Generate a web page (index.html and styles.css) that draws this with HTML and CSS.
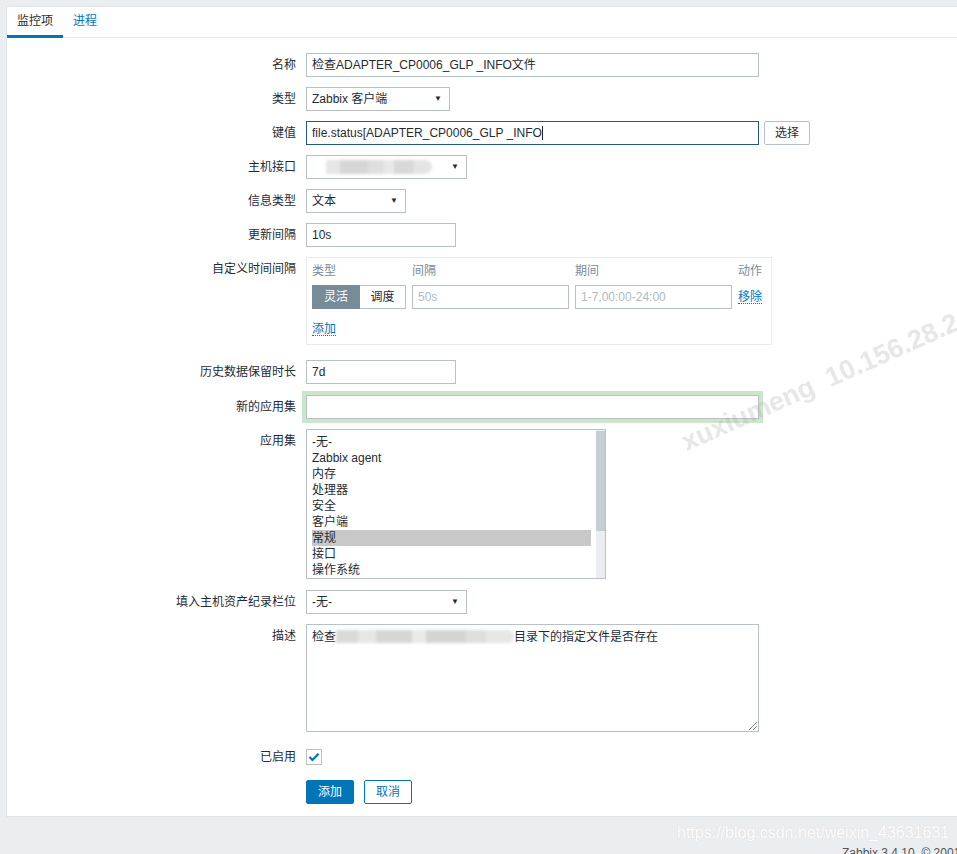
FILE: index.html
```html
<!doctype html>
<html lang="zh">
 <head>
  <meta charset="utf-8">
  <title>监控项</title>
  <link rel="stylesheet" href="styles.css">
 </head>
 <body>
  <div class="panel">
   <ul class="tabs">
    <li class="tab tab-active">监控项</li>
    <li class="tab">进程</li>
   </ul>

   <div class="form">
    <div class="label">名称</div>
    <div class="field"><div class="input w-wide">检查ADAPTER_CP0006_GLP _INFO文件</div></div>

    <div class="label">类型</div>
    <div class="field"><div class="select w-type"><span>Zabbix 客户端</span><span class="arrow">▼</span></div></div>

    <div class="label">键值</div>
    <div class="field row">
     <div class="input w-wide input-focus">file.status[ADAPTER_CP0006_GLP _INFO<span class="caret"></span></div>
     <div class="btn-alt">选择</div>
    </div>

    <div class="label">主机接口</div>
    <div class="field"><div class="select w-iface"><span class="blur blur-iface"></span><span class="arrow">▼</span></div></div>

    <div class="label">信息类型</div>
    <div class="field"><div class="select w-info"><span>文本</span><span class="arrow">▼</span></div></div>

    <div class="label">更新间隔</div>
    <div class="field"><div class="input w-short">10s</div></div>

    <div class="label">自定义时间间隔</div>
    <div class="field">
     <div class="intervals">
      <div class="ihead">类型</div>
      <div class="ihead">间隔</div>
      <div class="ihead">期间</div>
      <div class="ihead">动作</div>

      <div class="radio">
       <span class="radio-on">灵活</span><span class="radio-off">调度</span>
      </div>
      <div class="input placeholder">50s</div>
      <div class="input placeholder">1-7,00:00-24:00</div>
      <a class="link">移除</a>

      <a class="link add-link">添加</a>
     </div>
    </div>

    <div class="label">历史数据保留时长</div>
    <div class="field"><div class="input w-short">7d</div></div>

    <div class="label shift-1">新的应用集</div>
    <div class="field shift-1"><div class="input w-wide input-glow"></div></div>

    <div class="label">应用集</div>
    <div class="field">
     <div class="listbox">
      <ul class="options">
       <li>-无-</li>
       <li>Zabbix agent</li>
       <li>内存</li>
       <li>处理器</li>
       <li>安全</li>
       <li>客户端</li>
       <li class="selected">常规</li>
       <li>接口</li>
       <li>操作系统</li>
      </ul>
      <div class="scrollbar"><div class="thumb"></div></div>
     </div>
    </div>

    <div class="label shift-1">填入主机资产纪录栏位</div>
    <div class="field shift-1"><div class="select w-iface"><span>-无-</span><span class="arrow">▼</span></div></div>

    <div class="label">描述</div>
    <div class="field">
     <div class="textarea">检查<span class="blur blur-desc"></span>目录下的指定文件是否存在<span class="grip"></span></div>
    </div>

    <div class="label shift-3">已启用</div>
    <div class="field shift-3"><span class="checkbox"><svg width="12" height="10" viewBox="0 0 12 10"><path d="M1.5 5 L4.5 8 L10.5 1.8" fill="none" stroke="#0275b8" stroke-width="2.2"/></svg></span></div>

    <div class="label"></div>
    <div class="field row buttons">
     <div class="btn">添加</div>
     <div class="btn-alt btn-cancel">取消</div>
    </div>
   </div>

   <div class="watermark">xuxiumeng&nbsp;&nbsp;10.156.28.247</div>
  </div>

  <div class="footer">
   <div class="csdn">https://blog.csdn.net/weixin_43631631</div>
   <div class="copyright">Zabbix 3.4.10. © 2001–2018, Zabbix SIA</div>
  </div>
 </body>
</html>
```

FILE: styles.css
```css
	body {
		margin: 0;
		padding: 6px 0 0 6px;
		background-color: #ebeef0;
		font-family: 'Liberation Sans', Arial, 'Noto Sans CJK SC', sans-serif;
		font-size: 12px;
		color: #1f2c33;
		overflow: hidden;
		height: 848px;
	}

	.panel {
		position: relative;
		background: #ffffff;
		border: 1px solid #dfe4e7;
		border-right: 0;
		height: 809px;
		overflow: hidden;
	}

	/* tabs */
	.tabs {
		display: flex;
		margin: 0;
		padding: 0;
		list-style: none;
		border-bottom: 1px solid #ebeef0;
	}

	.tab {
		padding: 0 10px;
		height: 28px;
		line-height: 28px;
		color: #0275b8;
		border-bottom: 3px solid transparent;
		margin-bottom: -1px;
	}

	.tab-active {
		color: #1f2c33;
		border-bottom-color: #0275b8;
	}

	/* form grid */
	.form {
		display: grid;
		grid-template-columns: 289px 1fr;
		column-gap: 10px;
		row-gap: 10px;
		padding-top: 15px;
	}

	.label {
		text-align: right;
		line-height: 24px;
		white-space: nowrap;
	}

	.field {
		min-height: 24px;
	}

	.shift-1 { margin-top: 1px; }
	.shift-3 { margin-top: 3px; }

	.row {
		display: flex;
		gap: 5px;
	}

	.input, .select {
		box-sizing: border-box;
		height: 24px;
		line-height: 22px;
		border: 1px solid #b7c1c6;
		padding: 0 5px;
		background: #fff;
		white-space: nowrap;
		overflow: hidden;
	}

	.w-wide { width: 453px; }
	.w-short { width: 150px; }
	.w-type { width: 144px; }
	.w-iface { width: 161px; }
	.w-info { width: 100px; }

	.input-focus {
		border-color: #25597a;
	}

	.caret {
		display: inline-block;
		width: 1px;
		height: 14px;
		background: #1f2c33;
		vertical-align: -3px;
	}

	.input-glow {
		box-shadow: 0 0 0 4px #cbe6cb;
	}

	.select {
		display: flex;
		justify-content: space-between;
		align-items: center;
	}

	.arrow {
		font-size: 8px;
		color: #1f2c33;
		padding-right: 2px;
	}

	.blur {
		display: inline-block;
		filter: blur(1.5px);
		vertical-align: middle;
	}

	.blur-iface {
		width: 124px;
		height: 14px;
		margin-left: -4px;
		background: linear-gradient(to right,
			#ffffff 0, #ffffff 18px,
			#e6e6e6 18px, #e6e6e6 32px,
			#d6d6d6 32px, #d6d6d6 60px,
			#dedede 60px, #dedede 76px,
			#e8e8e8 76px, #e8e8e8 86px,
			#d8d8d8 86px, #d8d8d8 106px,
			#e4e4e4 106px, #e4e4e4 124px);
		border-radius: 0 8px 8px 0;
	}

	.blur-desc {
		width: 178px;
		height: 13px;
		background: linear-gradient(to right,
			#dadada 0, #dadada 22px,
			#e6e6e6 22px, #e6e6e6 40px,
			#d6d6d6 40px, #d6d6d6 76px,
			#eaeaea 76px, #eaeaea 90px,
			#d4d4d4 90px, #d4d4d4 130px,
			#dedede 130px, #dedede 150px,
			#e6e6e6 150px, #e6e6e6 178px);
		border-radius: 0 7px 7px 0;
		margin-top: -2px;
	}

	/* buttons */
	.btn, .btn-alt {
		box-sizing: border-box;
		height: 24px;
		line-height: 22px;
		padding: 0 10px;
		border: 1px solid #0275b8;
		border-radius: 2px;
		text-align: center;
		white-space: nowrap;
	}

	.btn {
		width: 48px;
		background: #0275b8;
		color: #ffffff;
	}

	.btn-alt {
		background: #ffffff;
		color: #1f2c33;
		border-color: #b7c1c6;
	}

	.btn-cancel {
		width: 48px;
		color: #0275b8;
		border-color: #0275b8;
	}

	.buttons {
		gap: 10px;
		padding-top: 1px;
	}

	/* custom intervals */
	.intervals {
		box-sizing: border-box;
		width: 466px;
		border: 1px solid #ebebeb;
		padding: 5px 5px 8px 5px;
		margin-bottom: 5px;
		display: grid;
		grid-template-columns: 94px 157px 157px auto;
		column-gap: 6px;
		row-gap: 0;
	}

	.ihead {
		color: #768d99;
		line-height: 17px;
		padding-bottom: 5px;
	}

	.radio {
		display: flex;
		height: 24px;
		line-height: 22px;
		box-sizing: border-box;
	}

	.radio-on {
		box-sizing: border-box;
		width: 48px;
		text-align: center;
		background: #768d99;
		border: 1px solid #768d99;
		color: #ffffff;
	}

	.radio-off {
		box-sizing: border-box;
		width: 46px;
		text-align: center;
		border: 1px solid #b7c1c6;
		border-left: 0;
	}

	.placeholder {
		color: #acbbc2;
	}

	.link {
		color: #0275b8;
		line-height: 24px;
		justify-self: start;
	}

	.link::after {
		content: "";
		display: block;
		border-bottom: 1px dotted #0275b8;
		margin-top: -6px;
	}

	.add-link {
		grid-column: 1 / 2;
		margin-top: 8px;
	}

	/* listbox */
	.listbox {
		box-sizing: border-box;
		width: 300px;
		height: 150px;
		border: 1px solid #b7c1c6;
		display: flex;
		overflow: hidden;
	}

	.options {
		flex: 1;
		margin: 0;
		padding: 4px 5px 0 5px;
		list-style: none;
		line-height: 16px;
	}

	.options li {
		height: 16px;
	}

	.selected {
		background: #c8c8c8;
	}

	.scrollbar {
		width: 9px;
		background: #ebeef0;
		padding-top: 1px;
	}

	.thumb {
		height: 100px;
		background: #c4ced3;
	}

	/* textarea */
	.textarea {
		position: relative;
		box-sizing: border-box;
		width: 453px;
		height: 108px;
		border: 1px solid #b7c1c6;
		padding: 4px 5px;
		line-height: 16px;
	}

	.grip {
		position: absolute;
		right: 1px;
		bottom: 1px;
		width: 8px;
		height: 8px;
		background: linear-gradient(135deg, transparent 0, transparent 45%, #888 45%, #888 52%, transparent 52%, transparent 70%, #888 70%, #888 77%, transparent 77%);
	}

	.checkbox {
		box-sizing: border-box;
		display: flex;
		align-items: center;
		justify-content: center;
		width: 16px;
		height: 16px;
		margin-top: 4px;
		border: 1px solid #b7c1c6;
	}

	/* watermark drawn over the form */
	.watermark {
		position: absolute;
		left: 676px;
		top: 421px;
		transform: rotate(-24deg);
		transform-origin: left center;
		font-size: 27px;
		font-weight: bold;
		color: rgba(170, 170, 170, 0.3);
		white-space: nowrap;
		pointer-events: none;
	}

	/* footer */
	.footer {
		position: relative;
		height: 36px;
	}

	.csdn {
		position: absolute;
		left: 671px;
		top: 7px;
		font-size: 16px;
		color: #ffffff;
		text-shadow: 0 0 1px #c8cdd0;
		white-space: nowrap;
	}

	.copyright {
		position: absolute;
		left: 836px;
		top: 29px;
		font-size: 12px;
		color: #555;
		white-space: nowrap;
	}
```
